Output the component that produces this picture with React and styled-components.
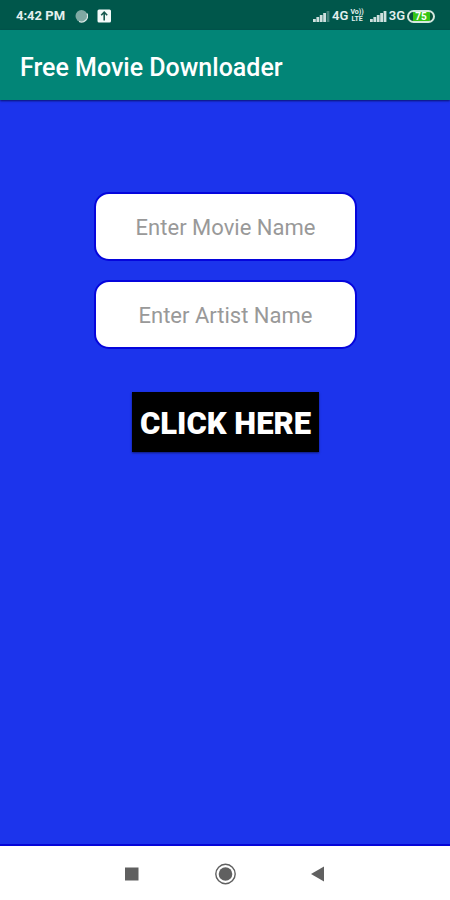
import React from "react";
import styled, { createGlobalStyle } from "styled-components";

const GlobalStyle = createGlobalStyle`
  * { box-sizing: border-box; }
  body {
    margin: 0;
    font-family: Roboto, "Noto Sans", sans-serif;
  }
`;

const Screen = styled.div`
  display: flex;
  flex-direction: column;
  min-height: 100vh;
  background: #1c34ec;
`;

const StatusBar = styled.div`
  display: flex;
  align-items: center;
  justify-content: space-between;
  height: 30px;
  padding: 2px 15px 0 16px;
  background: #00574b;
  color: #e4f0ee;
`;

const StatusGroup = styled.div`
  display: flex;
  align-items: center;
  gap: ${(p) => p.$gap}px;
`;

const Clock = styled.time`
  font-size: 13px;
  line-height: 16px;
  font-weight: 700;
`;

const Network = styled.span`
  font-size: 13px;
  line-height: 16px;
  font-weight: 600;
`;

const Volte = styled.span`
  display: flex;
  flex-direction: column;
  align-items: center;
  margin-right: 4px;
  font-size: 7px;
  line-height: 7px;
  font-weight: 700;
`;

const Battery = styled.span`
  width: 28px;
  height: 13px;
  border: 2px solid #d5e8df;
  border-radius: 7px;
  background: linear-gradient(to right, #07513b 16%, #35c414 16% 86%, #07513b 86%);
  color: #ffffff;
  font-size: 10px;
  line-height: 9px;
  font-weight: 700;
  text-align: center;
`;

const AppBar = styled.header`
  display: flex;
  align-items: center;
  height: 70px;
  padding: 5px 20px 0;
  background: #028577;
  box-shadow: 0 1px 2px rgba(0, 0, 60, 0.7);
`;

const Title = styled.h1`
  margin: 0;
  color: #ffffff;
  font-size: 25px;
  line-height: 32px;
  font-weight: 500;
`;

const SearchForm = styled.form`
  flex: 1;
  display: flex;
  flex-direction: column;
  align-items: center;
  gap: 19px;
  padding: 92px 19px 20px 20px;
  border-bottom: 2px solid #0505d8;
`;

const Field = styled.input`
  width: 64%;
  height: 69px;
  padding: 2px 12px 0;
  border: 2px solid #0505dc;
  border-radius: 15px;
  background: #ffffff;
  color: #222222;
  font-family: inherit;
  font-size: 22px;
  text-align: center;
  &::placeholder {
    color: #999999;
    opacity: 1;
  }
`;

const SubmitButton = styled.button`
  height: 60px;
  margin-top: 24px;
  padding: 3px 8px 0;
  border: 0;
  background: #000000;
  box-shadow: 0 1px 2px rgba(0, 0, 0, 0.5);
  color: #ffffff;
  font-family: inherit;
  font-size: 31px;
  line-height: 40px;
  font-weight: 900;
`;

const NavBar = styled.nav`
  display: flex;
  align-items: center;
  justify-content: center;
  gap: 70px;
  height: 54px;
  padding-top: 2px;
  background: #ffffff;
`;

const NavButton = styled.button`
  display: flex;
  padding: 0;
  border: 0;
  background: transparent;
`;

function Signal({ level }) {
  return (
    <svg width="17" height="12" viewBox="0 0 17 12" aria-hidden="true">
      {[0, 1, 2, 3, 4].map((bar) => (
        <rect
          key={bar}
          x={bar * 3.4}
          y={9 - bar * 2}
          width="2.8"
          height={bar * 2 + 3}
          fill="#e4f0ee"
          opacity={bar < level ? 0.9 : 0.3}
        />
      ))}
    </svg>
  );
}

export default function App() {
  return (
    <Screen>
      <GlobalStyle />
      <StatusBar>
        <StatusGroup $gap={9}>
          <Clock>4:42 PM</Clock>
          <svg width="14" height="14" viewBox="0 0 14 14" aria-hidden="true">
            <circle cx="7.5" cy="7" r="6" fill="#7fa9a3" />
            <path d="M13 4.5A6 6 0 0 1 5 12.4" fill="none" stroke="#d8e8e5" strokeWidth="1.2" />
          </svg>
          <svg width="14" height="14" viewBox="0 0 14 14" aria-hidden="true">
            <rect x="0.5" y="0.5" width="13.5" height="13" rx="1.5" fill="#f4faf9" />
            <path d="M7.2 11.5V3.5M4.2 6.2L7.2 3.2L10.2 6.2" fill="none" stroke="#17594f" strokeWidth="1.6" />
          </svg>
        </StatusGroup>
        <StatusGroup $gap={2}>
          <Signal level={4} />
          <Network>4G</Network>
          <Volte>
            <span>Vo))</span>
            <span>LTE</span>
          </Volte>
          <StatusGroup $gap={2}>
            <Signal level={5} />
            <Network>3G</Network>
            <Battery>75</Battery>
          </StatusGroup>
        </StatusGroup>
      </StatusBar>
      <AppBar>
        <Title>Free Movie Downloader</Title>
      </AppBar>
      <SearchForm onSubmit={(event) => event.preventDefault()}>
        <Field type="text" name="movie" placeholder="Enter Movie Name" aria-label="Movie name" />
        <Field type="text" name="artist" placeholder="Enter Artist Name" aria-label="Artist name" />
        <SubmitButton type="submit">CLICK HERE</SubmitButton>
      </SearchForm>
      <NavBar aria-label="System navigation">
        <NavButton type="button" aria-label="Recent apps">
          <svg width="24" height="24" viewBox="0 0 24 24">
            <rect x="6" y="5.5" width="13.5" height="13" fill="#606060" />
          </svg>
        </NavButton>
        <NavButton type="button" aria-label="Home">
          <svg width="24" height="24" viewBox="0 0 24 24">
            <circle cx="12.5" cy="12" r="9.7" fill="none" stroke="#606060" strokeWidth="1.4" />
            <circle cx="12.5" cy="12" r="6.8" fill="#606060" />
          </svg>
        </NavButton>
        <NavButton type="button" aria-label="Back">
          <svg width="24" height="24" viewBox="0 0 24 24">
            <path d="M4 12L17 4.5V19.5Z" fill="#606060" />
          </svg>
        </NavButton>
      </NavBar>
    </Screen>
  );
}
